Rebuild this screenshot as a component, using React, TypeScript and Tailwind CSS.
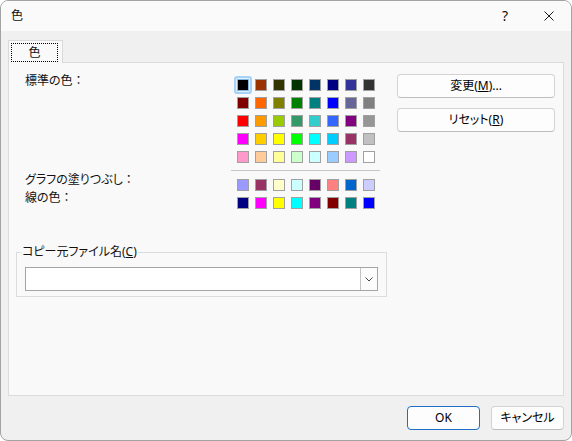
import React from "react";

const standardColors = [
  ["#000000", "#993300", "#333300", "#003300", "#003366", "#000080", "#333399", "#333333"],
  ["#800000", "#FF6600", "#808000", "#008000", "#008080", "#0000FF", "#666699", "#808080"],
  ["#FF0000", "#FF9900", "#99CC00", "#339966", "#33CCCC", "#3366FF", "#800080", "#969696"],
  ["#FF00FF", "#FFCC00", "#FFFF00", "#00FF00", "#00FFFF", "#00CCFF", "#993366", "#C0C0C0"],
  ["#FF99CC", "#FFCC99", "#FFFF99", "#CCFFCC", "#CCFFFF", "#99CCFF", "#CC99FF", "#FFFFFF"],
];

const chartColors = [
  ["#9999FF", "#993366", "#FFFFCC", "#CCFFFF", "#660066", "#FF8080", "#0066CC", "#CCCCFF"],
  ["#000080", "#FF00FF", "#FFFF00", "#00FFFF", "#800080", "#800000", "#008080", "#0000FF"],
];

function Swatch({ color, selected }: { color: string; selected?: boolean }) {
  return (
    <div
      className={
        selected
          ? "h-[12px] w-[12px] border border-[#7fb6e6] rounded-[1px] shadow-[0_0_0_1px_#e4f1fc,0_0_0_3px_#a6d2f6]"
          : "h-[12px] w-[12px] border border-[#a0a0a0]"
      }
      style={{ backgroundColor: color }}
    />
  );
}

function SwatchGrid({ rows, first }: { rows: string[][]; first?: boolean }) {
  return (
    <div className="grid grid-cols-[repeat(8,12px)] gap-[6px] pl-[6px]">
      {rows.flatMap((row, r) =>
        row.map((c, i) => <Swatch key={`${r}-${i}`} color={c} selected={first && r === 0 && i === 0} />)
      )}
    </div>
  );
}

function Button({
  children,
  className = "",
  primary,
}: {
  children: React.ReactNode;
  className?: string;
  primary?: boolean;
}) {
  return (
    <button
      className={
        "flex h-[24px] items-center justify-center rounded-[4px] border text-[12px] leading-none text-black " +
        (primary
          ? "border-[#1c6fc4] bg-[#fdfdfd]"
          : "border-[#d3d3d3] border-b-[#bdbdbd] bg-[#fdfdfd]") +
        " " +
        className
      }
    >
      {children}
    </button>
  );
}

// full-width colon keeps its spacing, like the original labels
const Colon = () => <span className="[font-feature-settings:normal]">：</span>;

export default function App() {
  return (
    <div className="flex h-[441px] w-[572px] flex-col overflow-hidden rounded-lg border border-[#a3a3a3] bg-[#f0f0f0] font-['Noto_Sans','Noto_Sans_CJK_JP',sans-serif] text-[12px] text-[#111] [font-feature-settings:'palt']">
      {/* Title bar */}
      <div className="flex h-[30px] shrink-0 items-center bg-[#fafafa] pl-[10px] pr-[17px]">
        <span className="leading-none">色</span>
        <span className="ml-auto text-[14px] leading-none">?</span>
        <svg className="ml-[36px]" width="10" height="10" viewBox="0 0 10 10">
          <path d="M0.5 0.5L9.5 9.5M9.5 0.5L0.5 9.5" stroke="#1a1a1a" strokeWidth="1" fill="none" />
        </svg>
      </div>

      {/* Body */}
      <div className="flex flex-1 flex-col px-[7px] pt-[9px]">
        {/* Tab */}
        <div className="relative z-10 -mb-px h-[23px] w-[55px] border-l border-r border-t border-[#d9d9d9] bg-[#f9f9f9]">
          <div className="m-[2px] flex h-[19px] w-[47px] items-center justify-center border border-dotted border-black leading-none">
            色
          </div>
        </div>

        {/* Panel */}
        <div className="flex h-[334px] w-[556px] border border-[#dcdcdc] bg-[#f9f9f9]">
          {/* Left area */}
          <div className="flex w-[388px] flex-col pl-[7px] pt-[10px]">
            <div className="flex pl-[9px]">
              <div className="flex w-[206px] flex-col">
                <span className="leading-[16px]">
                  標準の色<Colon />
                </span>
                <span className="mt-[82px] leading-[18px]">
                  グラフの塗りつぶし<Colon />
                </span>
                <span className="leading-[18px]">
                  線の色<Colon />
                </span>
              </div>
              <div className="flex w-[149px] flex-col pt-[6px]">
                <SwatchGrid rows={standardColors} first />
                <div className="mt-[7px] h-px bg-[#c6c6c6]" />
                <div className="mt-[8px]">
                  <SwatchGrid rows={chartColors} />
                </div>
              </div>
            </div>

            <fieldset className="mt-[35px] w-[371px] border border-[#dcdcdc] pb-[5px]">
              <legend className="ml-[4px] px-[1px] leading-[16px]">
                コピー元ファイル名(<span className="underline">C</span>)
              </legend>
              <div className="ml-[8px] mt-[7px] flex h-[24px] w-[353px] border border-[#a5a5a5] bg-white">
                <div className="flex-1" />
                <div className="flex w-[17px] items-center justify-center border-l border-[#c4c4c4] bg-[#fcfcfc]">
                  <svg width="8" height="5" viewBox="0 0 8 5">
                    <path d="M0.5 0.5L4 4L7.5 0.5" stroke="#444" strokeWidth="1" fill="none" />
                  </svg>
                </div>
              </div>
            </fieldset>
          </div>

          {/* Right buttons */}
          <div className="flex flex-col gap-[10px] pt-[11px]">
            <Button className="w-[158px]">
              変更(<span className="underline">M</span>)...
            </Button>
            <Button className="w-[158px]">
              リセット(<span className="underline">R</span>)
            </Button>
          </div>
        </div>

        {/* Dialog buttons */}
        <div className="mt-[10px] flex justify-end gap-[11px]">
          <Button primary className="w-[73px]">
            OK
          </Button>
          <Button className="w-[73px]">キャンセル</Button>
        </div>
      </div>
    </div>
  );
}
